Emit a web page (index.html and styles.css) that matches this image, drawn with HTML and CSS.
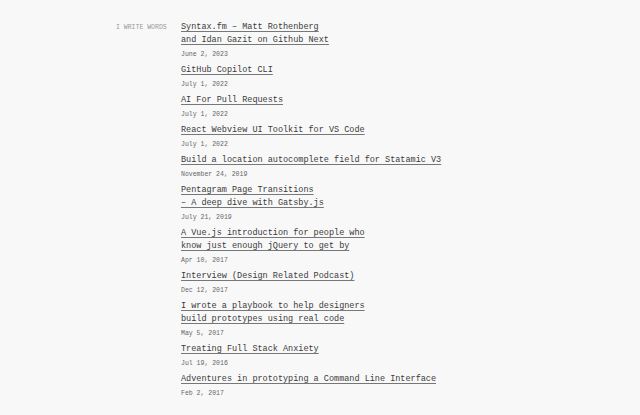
FILE: index.html
```html
<!DOCTYPE html>
<html lang="en">
<head>
<meta charset="UTF-8">
<title>Writing</title>
<link rel="stylesheet" href="styles.css">
</head>
<body>
<div class="container">
  <div class="section">
    <div class="label">I WRITE WORDS</div>
    <ul class="posts">
      <li class="post">
        <a class="title" href="#">Syntax.fm – Matt Rothenberg<br>and Idan Gazit on Github Next</a>
        <div class="date">June 2, 2023</div>
      </li>
      <li class="post">
        <a class="title" href="#">GitHub Copilot CLI</a>
        <div class="date">July 1, 2022</div>
      </li>
      <li class="post">
        <a class="title" href="#">AI For Pull Requests</a>
        <div class="date">July 1, 2022</div>
      </li>
      <li class="post">
        <a class="title" href="#">React Webview UI Toolkit for VS Code</a>
        <div class="date">July 1, 2022</div>
      </li>
      <li class="post">
        <a class="title" href="#">Build a location autocomplete field for Statamic V3</a>
        <div class="date">November 24, 2019</div>
      </li>
      <li class="post">
        <a class="title" href="#">Pentagram Page Transitions<br>– A deep dive with Gatsby.js</a>
        <div class="date">July 21, 2019</div>
      </li>
      <li class="post">
        <a class="title" href="#">A Vue.js introduction for people who<br>know just enough jQuery to get by</a>
        <div class="date">Apr 10, 2017</div>
      </li>
      <li class="post">
        <a class="title" href="#">Interview (Design Related Podcast)</a>
        <div class="date">Dec 12, 2017</div>
      </li>
      <li class="post">
        <a class="title" href="#">I wrote a playbook to help designers<br>build prototypes using real code</a>
        <div class="date">May 5, 2017</div>
      </li>
      <li class="post">
        <a class="title" href="#">Treating Full Stack Anxiety</a>
        <div class="date">Jul 19, 2016</div>
      </li>
      <li class="post">
        <a class="title" href="#">Adventures in prototyping a Command Line Interface</a>
        <div class="date">Feb 2, 2017</div>
      </li>
    </ul>
  </div>
</div>
</body>
</html>
```

FILE: styles.css
```css
body {
  font-family: 'Liberation Mono', 'DejaVu Sans Mono', monospace;
  margin: 0;
  background-color: #f8f8f8;
  color: #333;
}

.container {
  padding: 21px 0 0 116px;
}

.section {
  display: flex;
  align-items: flex-start;
}

.label {
  width: 65px;
  flex-shrink: 0;
  font-size: 6.5px;
  line-height: 13px;
  color: #999;
}

.posts {
  list-style: none;
  margin: 0;
  padding: 0;
}

.post {
  font-size: 8.5px;
  line-height: 13px;
  margin-bottom: 4px;
}

.title {
  color: #3a3a3a;
  text-decoration: underline;
  text-decoration-color: #777;
  text-decoration-thickness: 1px;
  text-underline-offset: 2px;
}

.date {
  margin-top: 3px;
  font-size: 6.5px;
  line-height: 10px;
  color: #666;
}
```
